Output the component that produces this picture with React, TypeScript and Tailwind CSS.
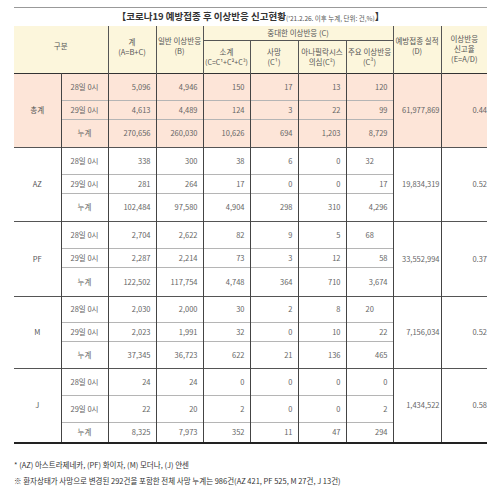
import React from "react";

type Group = {
  label: string;
  heights: [number, number, number];
  rows: string[][];
  d: string;
  e: string;
  peach?: boolean;
  leftC3?: boolean;
};

const groups: Group[] = [
  {
    label: "총계",
    heights: [27, 19, 28],
    rows: [
      ["5,096", "4,946", "150", "17", "13", "120"],
      ["4,613", "4,489", "124", "3", "22", "99"],
      ["270,656", "260,030", "10,626", "694", "1,203", "8,729"],
    ],
    d: "61,977,869",
    e: "0.44",
    peach: true,
  },
  {
    label: "AZ",
    heights: [27, 19, 28],
    rows: [
      ["338", "300", "38", "6", "0", "32"],
      ["281", "264", "17", "0", "0", "17"],
      ["102,484", "97,580", "4,904", "298", "310", "4,296"],
    ],
    d: "19,834,319",
    e: "0.52",
    leftC3: true,
  },
  {
    label: "PF",
    heights: [27, 19, 29],
    rows: [
      ["2,704", "2,622", "82", "9", "5", "68"],
      ["2,287", "2,214", "73", "3", "12", "58"],
      ["122,502", "117,754", "4,748", "364", "710", "3,674"],
    ],
    d: "33,552,994",
    e: "0.37",
    leftC3: true,
  },
  {
    label: "M",
    heights: [26, 19, 27],
    rows: [
      ["2,030", "2,000", "30", "2", "8", "20"],
      ["2,023", "1,991", "32", "0", "10", "22"],
      ["37,345", "36,723", "622", "21", "136", "465"],
    ],
    d: "7,156,034",
    e: "0.52",
    leftC3: true,
  },
  {
    label: "J",
    heights: [27, 27, 20],
    rows: [
      ["24", "24", "0", "0", "0", "0"],
      ["22", "20", "2", "0", "0", "2"],
      ["8,325", "7,973", "352", "11", "47", "294"],
    ],
    d: "1,434,522",
    e: "0.58",
  },
];

const dates = ["28일 0시", "29일 0시", "누계"];

export default function App() {
  const font = { fontFamily: '"Noto Sans CJK KR", "Noto Sans", sans-serif' };
  return (
    <div className="w-[500px] h-[488px] bg-white overflow-hidden text-[#555]" style={font}>
      <div className="ml-[14px] w-[473px] pt-[7px]">
        <div className="border-t border-[#999] h-[19px] flex items-center justify-center text-[#333]">
          <span className="text-[9.5px] font-bold leading-none">【코로나19 예방접종 후 이상반응 신고현황</span>
          <span className="text-[6.5px] leading-none mt-[2px] text-[#555]">('21.2.26. 이후 누계, 단위: 건,%)</span>
          <span className="text-[9.5px] font-bold leading-none">】</span>
        </div>
        <table className="w-[473px] table-fixed border-collapse text-[7.5px] leading-[10px]">
          <colgroup>
            <col className="w-[47px]" />
            <col className="w-[47px]" />
            <col className="w-[48px]" />
            <col className="w-[47px]" />
            <col className="w-[47px]" />
            <col className="w-[48px]" />
            <col className="w-[48px]" />
            <col className="w-[47px]" />
            <col className="w-[48px]" />
            <col className="w-[46px]" />
          </colgroup>
          <thead className="bg-[#fcf6dc] text-[#555]">
            <tr className="h-[14px]">
              <td colSpan={2} rowSpan={2} className="border-r border-[#555] text-center align-middle pb-[6px]">
                구분
              </td>
              <td rowSpan={2} className="border-r border-[#555] text-center align-middle pb-[4px]">
                계<br />(A=B+C)
              </td>
              <td rowSpan={2} className="border-r border-[#555] text-center align-middle pb-[6px]">
                일반 이상반응<br />(B)
              </td>
              <td colSpan={4} className="border-r border-[#555] text-center align-middle">
                중대한 이상반응 (C)
              </td>
              <td rowSpan={2} className="border-r border-[#555] text-center align-middle pb-[6px]">
                예방접종 실적<br />(D)
              </td>
              <td rowSpan={2} className="text-center align-middle">
                이상반응<br />신고율<br />(E=A/D)
              </td>
            </tr>
            <tr className="h-[33px]">
              <td className="border-t border-r border-[#555] text-center align-middle whitespace-nowrap">
                소계<br />
                <span className="text-[7px]">(C=C¹+C²+C³)</span>
              </td>
              <td className="border-t border-r border-[#555] text-center align-middle">
                사망<br />(C¹)
              </td>
              <td className="border-t border-r border-[#555] text-center align-middle whitespace-nowrap">
                아나필락시스<br />의심(C²)
              </td>
              <td className="border-t border-r border-[#555] text-center align-middle whitespace-nowrap">
                주요 이상반응<br />(C³)
              </td>
            </tr>
          </thead>
          <tbody className="text-[#666]">
            {groups.map((g, gi) =>
              g.rows.map((row, ri) => {
                const bg = g.peach ? "bg-[#fde5d8]" : "bg-white";
                const topFirst = gi === 0 ? "border-t-[1.5px] border-t-[#333]" : "border-t border-t-[#555]";
                const top = ri === 0 ? topFirst : "border-t border-t-[#b5b5b5]";
                return (
                  <tr key={`${gi}-${ri}`} className={bg} style={{ height: g.heights[ri] }}>
                    {ri === 0 && (
                      <td rowSpan={3} className={`${topFirst} border-r border-r-[#444] text-center align-middle text-[#555]`}>
                        {g.label}
                      </td>
                    )}
                    <td className={`${top} border-r border-r-[#444] text-center align-middle whitespace-nowrap`}>
                      {dates[ri]}
                    </td>
                    {row.map((v, ci) => {
                      const left = g.leftC3 && ri === 0 && ci === 5;
                      return (
                        <td
                          key={ci}
                          className={`${top} border-r border-r-[#444] align-middle whitespace-nowrap ${
                            left ? "text-left pl-[19px]" : "text-right pr-[5px]"
                          }`}
                        >
                          {v}
                        </td>
                      );
                    })}
                    {ri === 0 && (
                      <td rowSpan={3} className={`${topFirst} border-r border-r-[#444] text-right align-middle pr-[1px] whitespace-nowrap`}>
                        {g.d}
                      </td>
                    )}
                    {ri === 0 && (
                      <td rowSpan={3} className={`${topFirst} text-right align-middle pr-0 whitespace-nowrap`}>
                        {g.e}
                      </td>
                    )}
                  </tr>
                );
              })
            )}
          </tbody>
        </table>
        <div className="border-t-2 border-[#222]" />
        <div className="mt-[13px] text-[7.5px] leading-[16px] text-[#333] whitespace-nowrap">
          <div>* (AZ) 아스트라제네카, (PF) 화이자, (M) 모더나, (J) 얀센</div>
          <div>※ 환자상태가 사망으로 변경된 292건을 포함한 전체 사망 누계는 986건(AZ 421, PF 525, M 27건, J 13건)</div>
        </div>
      </div>
    </div>
  );
}
